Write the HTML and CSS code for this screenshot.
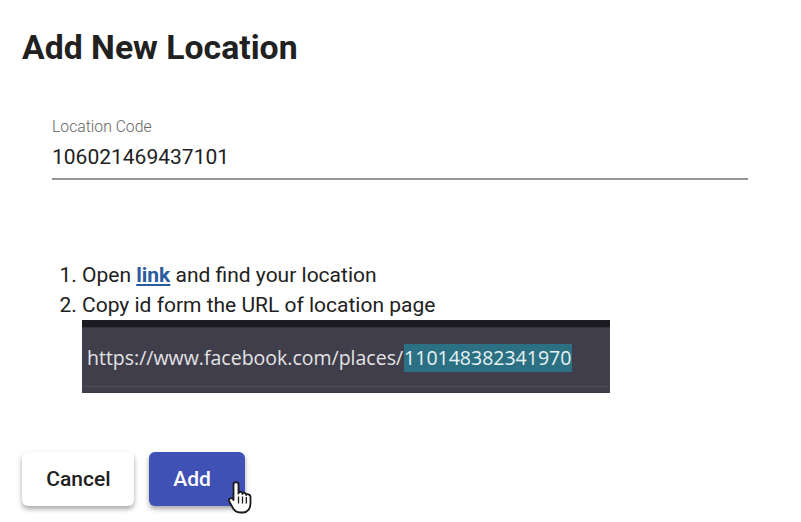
FILE: index.html
```html
<!DOCTYPE html>
<html lang="en">

<head>
    <meta charset="UTF-8">
    <title>Add New Location</title>
    <link rel="stylesheet" href="styles.css">
</head>

<body>
    <h1 class="title">Add New Location</h1>

    <div class="field">
        <label class="field-label" for="code">Location Code</label>
        <input class="field-input" id="code" type="text" value="106021469437101">
    </div>

    <ol class="steps">
        <li>Open <a href="#">link</a> and find your location</li>
        <li>Copy id form the URL of location page
            <div class="url-shot">
                <div class="url-top"></div>
                <div class="url-bar">
                    <span class="url-text">https://www.facebook.com/places/</span><span class="url-id">110148382341970</span>
                </div>
                <div class="url-bottom"></div>
            </div>
        </li>
    </ol>

    <div class="actions">
        <button class="btn btn-cancel" type="button">Cancel</button>
        <div class="btn-wrap">
            <button class="btn btn-add" type="button">Add</button>
            <svg class="cursor" width="24" height="33" viewBox="0 0 24 33">
                <path d="M5.500 3.500C5.500 0.300 10.500 0.300 10.500 3.500V12.500C10.500 10.300 14.500 10.300 14.500 13C14.500 11.300 18.200 11.300 18.200 14C18.200 12.500 22.500 13 22.500 16V22.500C22.500 27.500 19.500 31.500 15 31.500H12C9 31.500 7 30 5.500 28L1.300 20.500C0 18 3 16 5 18L5.500 19Z" fill="#fff" stroke="#1a1a1a" stroke-width="1.800" stroke-linejoin="round"/>
                <path d="M10.500 15.500v7M14.500 15.500v7M18.300 16v6.500" stroke="#1a1a1a" stroke-width="1.300" fill="none"/>
            </svg>
        </div>
    </div>
</body>

</html>
```

FILE: styles.css
```css
body {
    margin: 0;
    padding: 29px 22px 0;
    height: 522px;
    box-sizing: border-box;
    overflow: hidden;
    background: #fff;
    font-family: Roboto, sans-serif;
    color: #212121;
}

.title {
    margin: 0;
    font-size: 33.75px;
    line-height: 38px;
    font-weight: 700;
}

.field {
    margin: 52px 31px 0 30px;
}

.field-label {
    display: block;
    font-size: 15.75px;
    font-weight: 300;
    line-height: 16px;
    color: #666;
}

.field-input {
    display: block;
    width: 100%;
    box-sizing: border-box;
    margin-top: 5px;
    padding: 5px 0 9px;
    border: none;
    border-bottom: 2px solid #949494;
    outline: none;
    font-family: Roboto, sans-serif;
    font-size: 21px;
    line-height: 24px;
    color: #212121;
}

.steps {
    margin: 80px 0 0;
    padding: 0 0 0 60px;
    font-size: 21px;
    line-height: 30px;
}

.steps a {
    color: #2b5c9e;
    font-weight: 700;
}

.url-shot {
    width: 528px;
    height: 73px;
    background: #403e4a;
    display: flex;
    flex-direction: column;
}

.url-top {
    height: 7px;
    background: #1c1b22;
    border-bottom: 1px solid #33323b;
}

.url-bar {
    flex: 1;
    display: flex;
    align-items: center;
    padding: 2px 0 0 5px;
    font-family: "Open Sans", sans-serif;
    font-size: 19.5px;
    color: #e4e4e6;
}

.url-id {
    margin-left: 1px;
    background: #2b7183;
    color: #e8f2f4;
    padding: 0 1px 0 0;
    line-height: 28px;
}

.url-bottom {
    height: 6px;
    border-top: 1px solid #4d4b56;
}

.actions {
    display: flex;
    gap: 15px;
    margin-top: 59px;
}

.btn {
    display: block;
    height: 54px;
    border: none;
    border-radius: 6px;
    font-family: Roboto, sans-serif;
    font-size: 21px;
    font-weight: 500;
    box-shadow: 0 3px 5px rgba(0, 0, 0, 0.35);
}

.btn-cancel {
    width: 112px;
    padding: 0 0 0 1px;
    background: #fff;
    color: #212121;
}

.btn-add {
    width: 96px;
    padding: 0 10px 0 0;
    background: #3f51b5;
    color: #fff;
}

.btn-wrap {
    position: relative;
}

.cursor {
    position: absolute;
    left: 79px;
    top: 29px;
}
```
